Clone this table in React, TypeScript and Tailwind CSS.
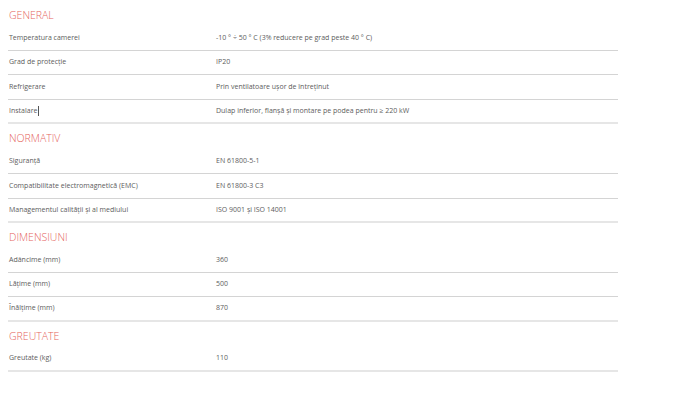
import React from 'react';

type Row = { label: string; value: string; caret?: boolean };
type Section = { title: string; rows: Row[] };

const SECTIONS: Section[] = [
  {
    title: 'GENERAL',
    rows: [
      { label: 'Temperatura camerei', value: '-10 ° ÷ 50 ° C (3% reducere pe grad peste 40 ° C)' },
      { label: 'Grad de protecție', value: 'IP20' },
      { label: 'Refrigerare', value: 'Prin ventilatoare ușor de întreținut' },
      { label: 'Instalare', value: 'Dulap inferior, flanșă și montare pe podea pentru ≥ 220 kW', caret: true },
    ],
  },
  {
    title: 'NORMATIV',
    rows: [
      { label: 'Siguranță', value: 'EN 61800-5-1' },
      { label: 'Compatibilitate electromagnetică (EMC)', value: 'EN 61800-3 C3' },
      { label: 'Managementul calității și al mediului', value: 'ISO 9001 și ISO 14001' },
    ],
  },
  {
    title: 'DIMENSIUNI',
    rows: [
      { label: 'Adâncime (mm)', value: '360' },
      { label: 'Lățime (mm)', value: '500' },
      { label: 'Înălțime (mm)', value: '870' },
    ],
  },
  {
    title: 'GREUTATE',
    rows: [{ label: 'Greutate (kg)', value: '110' }],
  },
];

export default function App() {
  return (
    <div className="h-[394px] w-[700px] overflow-hidden bg-white pt-px font-['Open_Sans',sans-serif]">
      <div className="ml-[8px] w-[610px]">
        {SECTIONS.map((s) => (
          <div key={s.title}>
            <div className="flex h-[25px] items-center pl-[1px] pt-[4px] text-[10.5px] font-light text-[#e5635c]">
              {s.title}
            </div>
            {s.rows.map((r, i) => (
              <div
                key={r.label}
                className={`flex h-[24.6px] items-center text-[7px] text-[#5c5c5c] ${
                  i === s.rows.length - 1 ? 'border-b-2 border-[#e6e6e6]' : 'border-b border-[#d4d4d4]'
                }`}
              >
                <div className="flex w-[208px] items-center pl-[1px]">
                  {r.label}
                  {r.caret && <span className="ml-px inline-block h-[10px] w-px bg-[#555]" />}
                </div>
                <div>{r.value}</div>
              </div>
            ))}
          </div>
        ))}
      </div>
    </div>
  );
}
